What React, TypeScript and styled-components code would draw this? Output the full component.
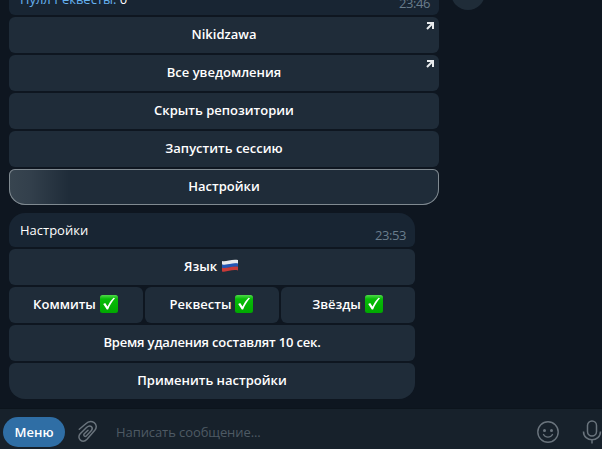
import React from "react";
import styled, { createGlobalStyle } from "styled-components";

const Global = createGlobalStyle`
  * { box-sizing: border-box; }
  html, body { margin: 0; background: #0e1620; overflow: hidden; }
`;

const Page = styled.main`
  width: 602px;
  height: 449px;
  overflow: hidden;
  display: flex;
  flex-direction: column;
  background: #0e1620;
  color: #fff;
  font: 400 13px/18px "Open Sans", "Noto Sans", sans-serif;
`;

const Chat = styled.section`
  height: 408px;
  display: flex;
  flex-direction: column;
  gap: 8px;
  padding-left: 9px;
`;

const MessageRow = styled.div`
  display: flex;
  gap: 12px;
`;

const Message = styled.article<{ $width: number }>`
  width: ${(p) => p.$width}px;
  display: flex;
  flex-direction: column;
  gap: 2px;
`;

const Bubble = styled.div<{ $clipped?: boolean }>`
  height: ${(p) => (p.$clipped ? 15 : 34)}px;
  display: flex;
  justify-content: space-between;
  align-items: flex-end;
  padding: 0 9px 3px 11px;
  border-radius: ${(p) => (p.$clipped ? "0 0 6px 6px" : "16px 16px 6px 6px")};
  background: #182533;
  overflow: hidden;
`;

const BubbleText = styled.span<{ $tight?: boolean }>`
  margin-bottom: ${(p) => (p.$tight ? 4 : 5)}px;
  letter-spacing: ${(p) => (p.$tight ? "-0.02px" : "0")};
  white-space: nowrap;
`;

const Link = styled.span`
  color: #66b2f0;
`;

const Time = styled.time`
  color: #6a7d8c;
  font-size: 13px;
  line-height: 18px;
  letter-spacing: -0.45px;
`;

const ButtonRow = styled.div`
  display: flex;
  gap: 2px;
`;

const InlineButton = styled.button<{ $last?: boolean; $active?: boolean; $tight?: boolean }>`
  position: relative;
  flex: 1 1 0;
  height: 36px;
  display: flex;
  align-items: center;
  justify-content: center;
  gap: 4px;
  padding: 0 0 2px;
  border: 0;
  border-radius: ${(p) => (p.$last ? "6px 6px 16px 16px" : "6px")};
  background: ${(p) =>
    p.$active
      ? "linear-gradient(90deg, #384550 0, #33404c 20px, #1f2c39 60px)"
      : "#1f2c39"};
  box-shadow: ${(p) => (p.$active ? "inset 0 0 0 1px #808a91" : "none")};
  color: #fff;
  font: 600 13px/18px "Open Sans", "Noto Sans", sans-serif;
  letter-spacing: ${(p) => (p.$tight ? "-0.17px" : "0")};
  white-space: nowrap;
`;

const Corner = styled.svg`
  position: absolute;
  top: 5px;
  right: 5px;
`;

const Emoji = styled.svg`
  flex: none;
  margin-right: 1px;
`;

const Avatar = styled.div`
  width: 34px;
  height: 34px;
  margin: -24px 0 0;
  border-radius: 50%;
  background: #1f2c38;
`;

const Composer = styled.footer`
  height: 41px;
  display: flex;
  align-items: center;
  padding: 6px 0 0 3px;
  border-top: 1px solid #0c141c;
  background: #17212b;
`;

const MenuButton = styled.button`
  width: 62px;
  height: 30px;
  padding: 0 0 1px;
  border: 0;
  border-radius: 15px;
  background: #2f6ea5;
  color: #fff;
  font: 600 13px/18px "Open Sans", "Noto Sans", sans-serif;
`;

const Attach = styled.svg`
  margin: 0 0 0 12px;
`;

const Placeholder = styled.span`
  flex: 1;
  margin: 0 0 1px 17px;
  color: #4e5a64;
  letter-spacing: -0.08px;
`;

const Smile = styled.svg`
  flex: none;
`;

const Mic = styled.svg`
  flex: none;
  margin: 0 0 0 23px;
`;

const UrlMark = () => (
  <Corner width="8" height="8" viewBox="0 0 8 8" fill="none" stroke="#e8ebed">
    <path d="M1 1H7V7M7 1L1 7" strokeWidth="2" />
  </Corner>
);

const Check = () => (
  <Emoji width="18" height="18" viewBox="0 0 18 18">
    <defs>
      <linearGradient id="green" x2="0" y2="1">
        <stop stopColor="#52d94c" />
        <stop offset=".22" stopColor="#08bd08" />
        <stop offset="1" stopColor="#00a800" />
      </linearGradient>
    </defs>
    <rect width="18" height="18" rx="2.5" fill="url(#green)" />
    <path d="M3.2 9.1L5.2 8.1L7.5 11.5C9 8.2 11 5.2 13.6 2.7L15 3.3C12 6.7 10 10.2 8.1 14.5H6.8Z" fill="#fff" />
  </Emoji>
);

const Flag = () => (
  <Emoji width="18" height="18" viewBox="0 0 18 18">
    <path d="M1 4C5 5 10 2 17 3V7C11 6 6 9 1 7.800Z" fill="#e7e9ed" />
    <path d="M1 7.400C6 8.500 11 5.500 17 6.500V10C11 9 6 12 1 11Z" fill="#2355b4" />
    <path d="M1 10.800C6 12 11 8.700 17 9.700V13.500C11 12 6 15.500 1 14.500Z" fill="#c93a38" />
  </Emoji>
);

const firstButtons = [
  { label: "Nikidzawa", url: true },
  { label: "Все уведомления", url: true },
  { label: "Скрыть репозитории" },
  { label: "Запустить сессию" },
];

export default function App() {
  return (
    <Page>
      <Global />
      <Chat>
        <MessageRow>
          <Message $width={430}>
            <Bubble $clipped>
              <BubbleText $tight><Link>Пулл Реквесты:</Link> 0</BubbleText>
              <Time>23:46</Time>
            </Bubble>
            {firstButtons.map((b) => (
              <ButtonRow key={b.label}>
                <InlineButton>{b.label}{b.url && <UrlMark />}</InlineButton>
              </ButtonRow>
            ))}
            <ButtonRow><InlineButton $last $active>Настройки</InlineButton></ButtonRow>
          </Message>
          <Avatar />
        </MessageRow>
        <Message $width={406}>
          <Bubble>
            <BubbleText>Настройки</BubbleText>
            <Time>23:53</Time>
          </Bubble>
          <ButtonRow><InlineButton>Язык <Flag /></InlineButton></ButtonRow>
          <ButtonRow>
            {["Коммиты", "Реквесты", "Звёзды"].map((label) => (
              <InlineButton key={label}>{label} <Check /></InlineButton>
            ))}
          </ButtonRow>
          <ButtonRow><InlineButton $tight>Время удаления составлят 10 сек.</InlineButton></ButtonRow>
          <ButtonRow><InlineButton $last>Применить настройки</InlineButton></ButtonRow>
        </Message>
      </Chat>
      <Composer>
        <MenuButton>Меню</MenuButton>
        <Attach width="22" height="24" viewBox="0 0 22 24" fill="none" stroke="#6a747d" strokeWidth="1.5" strokeLinecap="round">
          <path d="M2.300 9.300L8.500 4C14.500-2 22.500 4.500 17.800 10.200L10 19.200C5.500 24-.8 18.500 3.200 13.800L9.500 7.500C13.500 3.800 17 7.800 14 11L9.500 15.800C8 17.300 5.800 15.500 7.300 13.800L11 10.300" />
        </Attach>
        <Placeholder>Написать сообщение...</Placeholder>
        <Smile width="22" height="22" viewBox="0 0 22 22" fill="none" stroke="#6a747d" strokeWidth="1.4">
          <circle cx="11" cy="11" r="10.200" />
          <circle cx="7.500" cy="9.500" r="1.500" fill="#6a747d" stroke="none" />
          <circle cx="14.500" cy="9.500" r="1.500" fill="#6a747d" stroke="none" />
          <path d="M6.500 13.500C8.500 17 13.500 17 15.500 13.500" strokeLinecap="round" />
        </Smile>
        <Mic width="20" height="24" viewBox="0 0 20 24" fill="none" stroke="#6a747d" strokeWidth="1.500">
          <rect x="5.500" y="1" width="9" height="15" rx="4.500" />
          <path d="M1.500 11.500C1.500 22.500 18.500 22.500 18.500 11.500M10 20V23.500" />
        </Mic>
      </Composer>
    </Page>
  );
}
